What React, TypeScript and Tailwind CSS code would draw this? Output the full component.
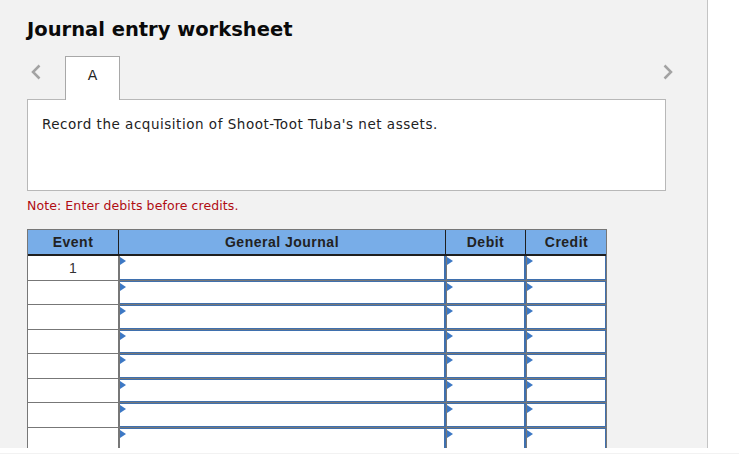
const rows = [0, 1, 2, 3, 4, 5, 6, 7];

function Arrow() {
  return (
    <svg className="absolute left-0 top-px" width="6" height="8" viewBox="0 0 6 8">
      <path d="M0 0 L6 4 L0 8 Z" fill="#3d78c4" />
    </svg>
  );
}

function EntryCell({ className, first }: { className: string; first: boolean }) {
  return (
    <div className={`relative h-full shrink-0 border-b border-[#3f70ae] bg-white ${first ? "" : "border-t"} ${className}`}>
      <Arrow />
    </div>
  );
}

export default function App() {
  return (
    <div className="h-[454px] w-[739px] overflow-hidden bg-white font-['DejaVu_Sans',sans-serif]">
      <div className="h-[448px] w-[708px] overflow-hidden border-r border-[#c4c4c4] bg-[#f2f2f2] pl-[27px] pt-[18px]">
        <h1 className="text-[19.5px] font-bold leading-[24px] text-[#0a0a0a]">Journal entry worksheet</h1>

        <div className="relative mt-[14px] flex h-[43px] w-[639px]">
          <svg className="absolute left-[3px] top-[8px]" width="12" height="16" viewBox="0 0 12 16">
            <path d="M9.5 1.5 L3 8 L9.5 14.5" fill="none" stroke="#a3a3a3" strokeWidth="2.5" />
          </svg>
          <div className="relative z-10 ml-[38px] flex h-[44px] w-[55px] justify-center border border-b-0 border-[#a8a8a8] bg-white pt-[8px] text-[14px] leading-[20px] text-[#222]">
            A
          </div>
          <svg className="absolute right-[-8px] top-[8px]" width="12" height="16" viewBox="0 0 12 16">
            <path d="M2.5 1.5 L9 8 L2.5 14.5" fill="none" stroke="#a3a3a3" strokeWidth="2.5" />
          </svg>
        </div>

        <div className="h-[92px] w-[639px] border border-[#b8b8b8] bg-white pl-[14px] pt-[15px] text-[13.5px] leading-[18px] tracking-[0.52px] text-[#222]">
          Record the acquisition of Shoot-Toot Tuba's net assets.
        </div>

        <p className="mt-[6px] text-[12.5px] leading-[18px] tracking-[0.1px] text-[#b00c12]">Note: Enter debits before credits.</p>

        <div className="mt-[14px] w-[580px] border-l border-r border-[#777] font-['Liberation_Sans',sans-serif]">
          <div className="flex h-[27px] border-t border-b-2 border-[#777] border-b-[#1f1f1f] bg-[#78ade8] text-[14px] font-bold tracking-[0.5px] text-[#222]">
            <div className="flex w-[91px] shrink-0 items-center justify-center border-r border-[#1f1f1f]">Event</div>
            <div className="flex w-[327px] shrink-0 items-center justify-center border-r border-[#1f1f1f]">General Journal</div>
            <div className="flex w-[80px] shrink-0 items-center justify-center border-r border-[#1f1f1f]">Debit</div>
            <div className="flex flex-1 items-center justify-center pl-px">Credit</div>
          </div>
          {rows.map((r) => (
            <div key={r} className="flex h-[24.5px] bg-[#777] pb-px">
              <div className="flex h-full w-[90px] shrink-0 items-center justify-center bg-white pt-[2px] text-[14px] text-[#333]">
                {r === 0 ? "1" : ""}
              </div>
              <div className="ml-[2px] flex h-full flex-1 gap-px">
                <EntryCell first={r === 0} className="w-[326px] border-r-2" />
                <EntryCell first={r === 0} className="w-[79px] border-r-2" />
                <EntryCell first={r === 0} className="flex-1 border-r" />
              </div>
            </div>
          ))}
        </div>
      </div>
      <div className="mt-[5px] h-px w-full bg-[#f2f2f2]" />
    </div>
  );
}
